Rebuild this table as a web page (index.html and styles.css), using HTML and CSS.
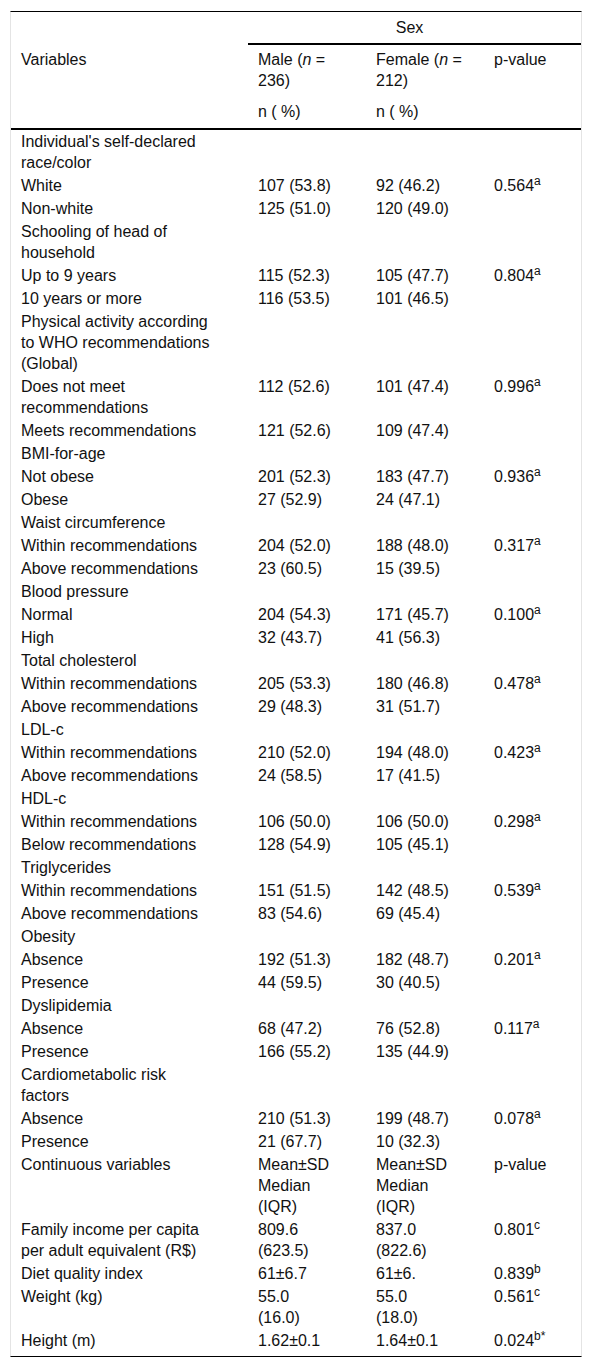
FILE: index.html
```html
<!DOCTYPE html>
<html>
<head>
    <meta charset="utf-8">
    <title>Table</title>
    <link rel="stylesheet" href="styles.css">
</head>
<body>

<table class="tbl">
	<colgroup>
		<col class="c-var">
		<col class="c-num">
		<col class="c-num">
		<col class="c-p">
	</colgroup>
	<thead>
		<tr class="h1">
			<th></th>
			<th colspan="3" class="sex">Sex</th>
		</tr>
		<tr class="h2">
			<th rowspan="2" class="var">Variables</th>
			<th>Male (<i>n</i> = 236)</th>
			<th>Female (<i>n</i> = 212)</th>
			<th>p-value</th>
		</tr>
		<tr class="h3">
			<th>n ( %)</th>
			<th>n ( %)</th>
			<th></th>
		</tr>
	</thead>
	<tbody>
		<tr><td>Individual's self-declared race/color</td><td></td><td></td><td></td></tr>
		<tr><td>White</td><td>107 (53.8)</td><td>92 (46.2)</td><td>0.564<sup>a</sup></td></tr>
		<tr><td>Non-white</td><td>125 (51.0)</td><td>120 (49.0)</td><td></td></tr>
		<tr><td>Schooling of head of household</td><td></td><td></td><td></td></tr>
		<tr><td>Up to 9 years</td><td>115 (52.3)</td><td>105 (47.7)</td><td>0.804<sup>a</sup></td></tr>
		<tr><td>10 years or more</td><td>116 (53.5)</td><td>101 (46.5)</td><td></td></tr>
		<tr><td>Physical activity according to WHO recommendations (Global)</td><td></td><td></td><td></td></tr>
		<tr><td>Does not meet recommendations</td><td>112 (52.6)</td><td>101 (47.4)</td><td>0.996<sup>a</sup></td></tr>
		<tr><td>Meets recommendations</td><td>121 (52.6)</td><td>109 (47.4)</td><td></td></tr>
		<tr><td>BMI-for-age</td><td></td><td></td><td></td></tr>
		<tr><td>Not obese</td><td>201 (52.3)</td><td>183 (47.7)</td><td>0.936<sup>a</sup></td></tr>
		<tr><td>Obese</td><td>27 (52.9)</td><td>24 (47.1)</td><td></td></tr>
		<tr><td>Waist circumference</td><td></td><td></td><td></td></tr>
		<tr><td>Within recommendations</td><td>204 (52.0)</td><td>188 (48.0)</td><td>0.317<sup>a</sup></td></tr>
		<tr><td>Above recommendations</td><td>23 (60.5)</td><td>15 (39.5)</td><td></td></tr>
		<tr><td>Blood pressure</td><td></td><td></td><td></td></tr>
		<tr><td>Normal</td><td>204 (54.3)</td><td>171 (45.7)</td><td>0.100<sup>a</sup></td></tr>
		<tr><td>High</td><td>32 (43.7)</td><td>41 (56.3)</td><td></td></tr>
		<tr><td>Total cholesterol</td><td></td><td></td><td></td></tr>
		<tr><td>Within recommendations</td><td>205 (53.3)</td><td>180 (46.8)</td><td>0.478<sup>a</sup></td></tr>
		<tr><td>Above recommendations</td><td>29 (48.3)</td><td>31 (51.7)</td><td></td></tr>
		<tr><td>LDL-c</td><td></td><td></td><td></td></tr>
		<tr><td>Within recommendations</td><td>210 (52.0)</td><td>194 (48.0)</td><td>0.423<sup>a</sup></td></tr>
		<tr><td>Above recommendations</td><td>24 (58.5)</td><td>17 (41.5)</td><td></td></tr>
		<tr><td>HDL-c</td><td></td><td></td><td></td></tr>
		<tr><td>Within recommendations</td><td>106 (50.0)</td><td>106 (50.0)</td><td>0.298<sup>a</sup></td></tr>
		<tr><td>Below recommendations</td><td>128 (54.9)</td><td>105 (45.1)</td><td></td></tr>
		<tr><td>Triglycerides</td><td></td><td></td><td></td></tr>
		<tr><td>Within recommendations</td><td>151 (51.5)</td><td>142 (48.5)</td><td>0.539<sup>a</sup></td></tr>
		<tr><td>Above recommendations</td><td>83 (54.6)</td><td>69 (45.4)</td><td></td></tr>
		<tr><td>Obesity</td><td></td><td></td><td></td></tr>
		<tr><td>Absence</td><td>192 (51.3)</td><td>182 (48.7)</td><td>0.201<sup>a</sup></td></tr>
		<tr><td>Presence</td><td>44 (59.5)</td><td>30 (40.5)</td><td></td></tr>
		<tr><td>Dyslipidemia</td><td></td><td></td><td></td></tr>
		<tr><td>Absence</td><td>68 (47.2)</td><td>76 (52.8)</td><td>0.117<sup>a</sup></td></tr>
		<tr><td>Presence</td><td>166 (55.2)</td><td>135 (44.9)</td><td></td></tr>
		<tr><td>Cardiometabolic risk factors</td><td></td><td></td><td></td></tr>
		<tr><td>Absence</td><td>210 (51.3)</td><td>199 (48.7)</td><td>0.078<sup>a</sup></td></tr>
		<tr><td>Presence</td><td>21 (67.7)</td><td>10 (32.3)</td><td></td></tr>
		<tr><td>Continuous variables</td><td>Mean±SD Median (IQR)</td><td>Mean±SD Median (IQR)</td><td>p-value</td></tr>
		<tr><td>Family income per capita per adult equivalent (R$)</td><td>809.6 (623.5)</td><td>837.0 (822.6)</td><td>0.801<sup>c</sup></td></tr>
		<tr><td>Diet quality index</td><td>61±6.7</td><td>61±6.</td><td>0.839<sup>b</sup></td></tr>
		<tr><td>Weight (kg)</td><td>55.0<br>(16.0)</td><td>55.0<br>(18.0)</td><td>0.561<sup>c</sup></td></tr>
		<tr class="last"><td>Height (m)</td><td>1.62±0.1</td><td>1.64±0.1</td><td>0.024<sup>b*</sup></td></tr>
	</tbody>
</table>

</body>
</html>
```

FILE: styles.css
```css
*{ margin:0; padding:0;}
body{ background:#fff; font-family: "Liberation Sans", Arial, Helvetica, sans-serif; font-size:16px; color:#111;}

.tbl{ width:572px; margin:11px 10px 12px; table-layout: fixed; border-collapse: separate; border-spacing:0; border-top:1px solid #000; border-bottom:1px solid #000; border-left:1px solid #e4e4e4; border-right:1px solid #e4e4e4;}
.tbl .c-var{ width:237px;}
.tbl .c-num{ width:118px;}
.tbl .c-p{ width:97px;}

/* head */
.tbl th{ padding:5px 20px 5px 10px; font-weight: normal; line-height:21px; text-align: left; vertical-align: top;}
.tbl th.sex{ text-align: center; border-bottom:2px solid #000;}
.tbl .h2 th{ padding-top:4px;}
.tbl th.var{ padding-top:4px; border-bottom:2px solid #000;}
.tbl .h3 th{ padding-bottom:6px; border-bottom:2px solid #000;}

/* body */
.tbl td{ padding:1px 20px 1px 10px; line-height:21px; vertical-align: top;}
.tbl td:first-child{ padding-right:35px;}
.tbl tr.last td{ padding-bottom:5px;}
.tbl sup{ font-size:12px; line-height:0; vertical-align: 6px;}
```
